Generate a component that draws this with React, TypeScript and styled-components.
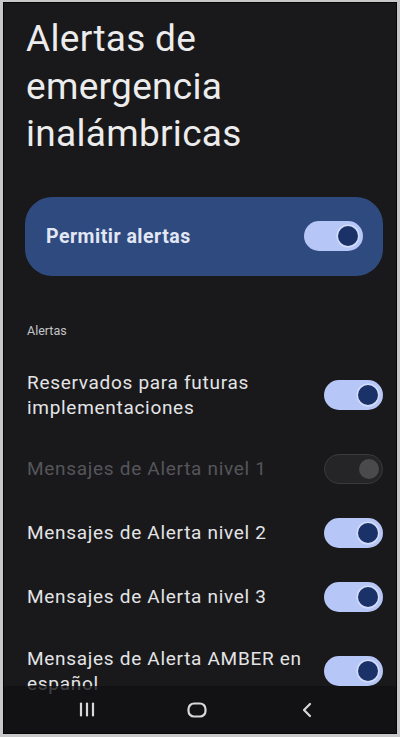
import React from 'react';
import styled, { createGlobalStyle, css } from 'styled-components';

const GlobalStyle = createGlobalStyle`
  html, body {
    margin: 0;
    padding: 0;
    background: #c8c8c8;
  }
  body {
    font-family: Roboto, "Noto Sans", "Liberation Sans", sans-serif;
    -webkit-font-smoothing: antialiased;
  }
`;

const Phone = styled.div`
  position: relative;
  margin: 2px 3px 3px 3px;
  height: 730px;
  border: 1px solid #050505;
  background: #19191b;
  overflow: hidden;
`;

const Content = styled.div`
  padding: 12px 13px 0 21px;
  display: flex;
  flex-direction: column;
`;

const Title = styled.h1`
  margin: 0 0 0 1px;
  font-size: 37px;
  line-height: 47.5px;
  font-weight: 400;
  color: #ececec;
  letter-spacing: 0.3px;
`;

const MasterCard = styled.div`
  margin-top: 39px;
  height: 79px;
  border-radius: 27px;
  background: #2e4a7e;
  display: flex;
  align-items: center;
  justify-content: space-between;
  padding: 0 20px 0 21px;
`;

const MasterLabel = styled.span`
  font-size: 19.5px;
  font-weight: 700;
  letter-spacing: 0.5px;
  color: #e2e7f5;
`;

const SectionHeader = styled.div`
  margin: 47px 0 14px 2px;
  font-size: 12.5px;
  line-height: 16px;
  color: #c4c4c6;
`;

const Row = styled.div`
  display: flex;
  align-items: center;
  justify-content: space-between;
  gap: 12px;
  padding: 17px 0 17px 2px;
`;

const RowLabel = styled.span<{ $disabled?: boolean }>`
  font-size: 19px;
  line-height: 25px;
  letter-spacing: 0.7px;
  color: ${(p) => (p.$disabled ? '#55555a' : '#e4e4e6')};
  max-width: 290px;
`;

const Track = styled.span<{ $disabled?: boolean }>`
  flex: none;
  position: relative;
  width: 59px;
  height: 30px;
  border-radius: 15px;
  box-sizing: border-box;
  ${(p) =>
    p.$disabled
      ? css`
          background: #252527;
          border: 1.5px solid #3a3a3d;
        `
      : css`
          background: #b6c6f6;
        `}
`;

const Thumb = styled.span<{ $disabled?: boolean }>`
  position: absolute;
  top: 50%;
  right: 5px;
  width: 20px;
  height: 20px;
  margin-top: -10px;
  border-radius: 50%;
  ${(p) =>
    p.$disabled
      ? css`
          right: 3.5px;
          background: #4a4a4d;
        `
      : css`
          background: #1b3268;
          box-shadow: 0 0 0 1.5px #d4ddfb;
        `}
`;

const NavBar = styled.div`
  position: absolute;
  left: 0;
  right: 0;
  bottom: 0;
  height: 47px;
  background: rgba(17, 17, 19, 0.78);
  display: flex;
  align-items: center;
  justify-content: center;
  gap: 70px;
  padding-right: 6px;
`;

const NavButton = styled.span`
  width: 40px;
  height: 30px;
  display: flex;
  align-items: center;
  justify-content: center;
`;

const Switch = ({ disabled }: { disabled?: boolean }) => (
  <Track $disabled={disabled}>
    <Thumb $disabled={disabled} />
  </Track>
);

const rows = [
  { label: 'Reservados para futuras implementaciones' },
  { label: 'Mensajes de Alerta nivel 1', disabled: true },
  { label: 'Mensajes de Alerta nivel 2' },
  { label: 'Mensajes de Alerta nivel 3' },
  { label: 'Mensajes de Alerta AMBER en español' },
];

export default function App() {
  return (
    <>
      <GlobalStyle />
      <Phone>
        <Content>
          <Title>
            Alertas de
            <br />
            emergencia
            <br />
            inalámbricas
          </Title>
          <MasterCard>
            <MasterLabel>Permitir alertas</MasterLabel>
            <Switch />
          </MasterCard>
          <SectionHeader>Alertas</SectionHeader>
          {rows.map((r) => (
            <Row key={r.label}>
              <RowLabel $disabled={r.disabled}>{r.label}</RowLabel>
              <Switch disabled={r.disabled} />
            </Row>
          ))}
        </Content>
        <NavBar>
          <NavButton>
            <svg width="18" height="15" viewBox="0 0 18 15">
              <g stroke="#d8d8d8" strokeWidth="2.2" strokeLinecap="round">
                <line x1="3" y1="1.5" x2="3" y2="13.5" />
                <line x1="9" y1="1.5" x2="9" y2="13.5" />
                <line x1="15" y1="1.5" x2="15" y2="13.5" />
              </g>
            </svg>
          </NavButton>
          <NavButton>
            <svg width="20" height="16" viewBox="0 0 20 16">
              <rect x="1.5" y="1.5" width="17" height="13" rx="5.5" fill="none" stroke="#d8d8d8" strokeWidth="2.2" />
            </svg>
          </NavButton>
          <NavButton>
            <svg width="12" height="16" viewBox="0 0 12 16">
              <polyline points="9,2 3,8 9,14" fill="none" stroke="#d8d8d8" strokeWidth="2.2" strokeLinecap="round" strokeLinejoin="round" />
            </svg>
          </NavButton>
        </NavBar>
      </Phone>
    </>
  );
}
